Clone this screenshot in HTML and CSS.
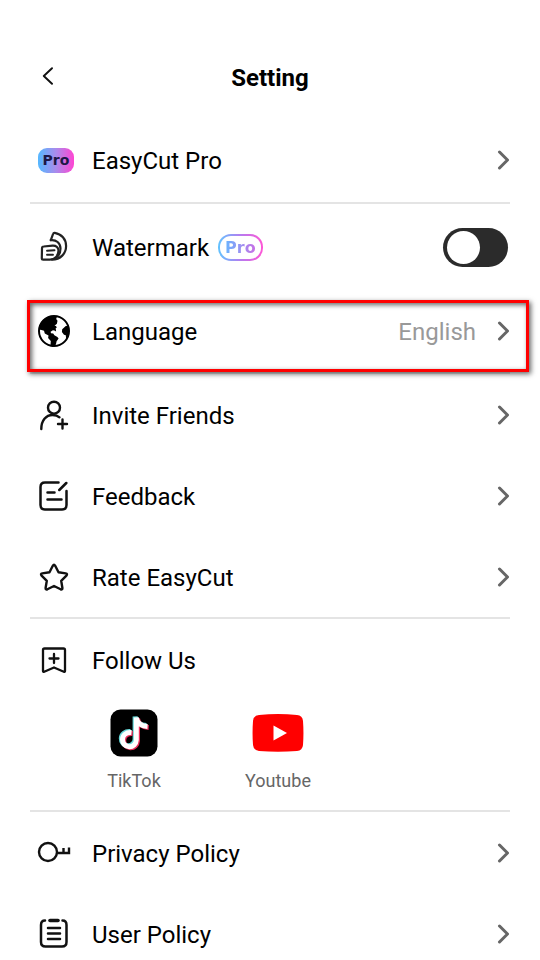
FILE: index.html
```html
<!DOCTYPE html>
<html lang="en">
<head>
<meta charset="utf-8">
<meta name="viewport" content="width=device-width, initial-scale=1">
<title>Setting</title>
<link rel="stylesheet" href="styles.css">
</head>
<body>
<svg class="defs" aria-hidden="true">
  <symbol id="chevron" viewBox="0 0 14 20"><path d="M3.500 2l8 8-8 8" fill="none" stroke="#666" stroke-width="3" stroke-linecap="round" stroke-linejoin="round"/></symbol>
</svg>
<main class="screen">
  <header class="header">
    <button class="back" type="button" aria-label="Back">
      <svg width="12" height="18" viewBox="0 0 12 18"><path d="M10 1.200L1.800 9l8.200 7.800" fill="none" stroke="#111" stroke-width="1.900" stroke-linecap="round" stroke-linejoin="round"/></svg>
    </button>
    <h1 class="title">Setting</h1>
  </header>

  <section class="group first">
    <a class="row" href="#pro">
      <span class="icon"><span class="badge filled">Pro</span></span>
      <span class="label">EasyCut Pro</span>
      <svg class="chevron"><use href="#chevron"/></svg>
    </a>
  </section>

  <section class="group">
    <div class="row tall">
      <span class="icon">
        <svg width="32" height="34" viewBox="0 0 32 34" fill="none" stroke="#222" stroke-width="2.200" stroke-linejoin="round" stroke-linecap="round"><path d="M4 18.200q0-1.600 1.600-1.700l9-.8c3.400-.2 5.900 1.500 5.900 4.900 0 5-3.500 9.100-8.500 9.100H5.200q-1.400 0-1.400-1.400z"/><path d="M12.800 10.200l2.300-6.400q.4-1.200 1.700-1C23.500 4 28.100 9 28.100 16c0 7.500-5.600 13.600-14.100 13.700"/><path d="M12.800 10.200C18 9.500 22.500 13 22.500 18.500c0 3.500-1.300 6.500-3.500 8.500"/><path d="M9 20.700l7.500-.5M9 24.800h6" stroke-width="1.900"/></svg>
      </span>
      <label class="label" for="watermark">Watermark</label>
      <span class="badge outlined"><span class="badge-text">Pro</span></span>
      <input class="switch" id="watermark" type="checkbox" role="switch">
    </div>
    <a class="row highlighted" href="#language">
      <span class="icon">
        <svg width="32" height="32" viewBox="0 0 32 32"><circle cx="16" cy="16" r="15" fill="#fff" stroke="#000" stroke-width="2"/><path d="M1 14.500C1.500 6 8 1 16 1l3 .4-.8 2.600 1.300 1.700-.6 3-2.400 2 1.600.2.600 2.200-1-.2.400 3.600-1.700-1-1.500-.3-2.300 1.600.4 1.400 2.200.2 1.200 1.800 3 1.800 1.200 1.500-2 2.700-.7 3.200-3.400 2.600-2-1.800.3-4.200-2.700-3 .4-2.600-3.700-1.800-.8-2.800-2.500-.7z"/><path d="M31 10.500l-3.200.5-3.600 3.300-.3 2.700 2.100 2.800 1.800.4.300 3.600 2-2.500L31 16z"/></svg>
      </span>
      <span class="label">Language</span>
      <span class="value">English</span>
      <svg class="chevron"><use href="#chevron"/></svg>
    </a>
  </section>

  <section class="group">
    <a class="row" href="#invite">
      <span class="icon">
        <svg width="32" height="32" viewBox="0 0 32 32" fill="none" stroke="#111" stroke-width="2.400" stroke-linecap="round"><circle cx="16" cy="8.700" r="6"/><path d="M3.300 30C3.300 21.500 8 16 14.500 16q4.500 0 7 2.300M24.500 20.500v9M20 25h9"/></svg>
      </span>
      <span class="label">Invite Friends</span>
      <svg class="chevron"><use href="#chevron"/></svg>
    </a>
    <a class="row" href="#feedback">
      <span class="icon">
        <svg width="32" height="32" viewBox="0 0 32 32" fill="none" stroke="#111" stroke-width="2.500" stroke-linecap="round" stroke-linejoin="round"><path d="M20.500 2.500H7q-4.500 0-4.500 4.500v18q0 4.500 4.500 4.500h17q4.500 0 4.500-4.500V11M28.300 3l-7 7M9.500 12.500h7M9.500 19.500h14"/></svg>
      </span>
      <span class="label">Feedback</span>
      <svg class="chevron"><use href="#chevron"/></svg>
    </a>
    <a class="row" href="#rate">
      <span class="icon">
        <svg width="32" height="32" viewBox="0 0 32 32" fill="none" stroke="#111" stroke-width="2.400" stroke-linejoin="round"><path d="M14.800 4.800Q16 2.800 17.200 4.800l3.300 6.500 7.200 1.100q2.200.5.700 2.200l-5.200 5.200 1.200 7.200q.1 2.100-1.800 1.300L16 25l-6.600 3.300q-1.900.8-1.800-1.300l1.200-7.200-5.200-5.200q-1.500-1.700.7-2.200l7.200-1.100z"/></svg>
      </span>
      <span class="label">Rate EasyCut</span>
      <svg class="chevron"><use href="#chevron"/></svg>
    </a>
  </section>

  <section class="group">
    <div class="row">
      <span class="icon">
        <svg width="32" height="32" viewBox="0 0 32 32" fill="none" stroke="#111" stroke-width="2.300" stroke-linecap="round" stroke-linejoin="round"><path d="M6.500 4.500h19q1.500 0 1.500 1.500V27q0 1.200-1.200.7L16 23.500 6.200 27.700q-1.200.5-1.200-.7V6q0-1.500 1.500-1.500zM16 10v9M11.500 14.500h9"/></svg>
      </span>
      <span class="label">Follow Us</span>
    </div>
    <nav class="socials">
      <a class="social" href="#tiktok">
        <svg width="48" height="48" viewBox="0 0 48 48"><rect x=".5" y=".5" width="47" height="47" rx="10" fill="#000"/><g fill="none" stroke-width="5"><g stroke="#68d8d8" transform="translate(-1.200 -1)"><path d="M21.500 23.500c-5-.5-9 2.500-9 7a6.800 6.800 0 0 0 13.800.5V8.500c.7 5 4.500 8.500 11.200 9"/></g><g stroke="#e8305c" transform="translate(1.200 1)"><path d="M21.500 23.500c-5-.5-9 2.500-9 7a6.800 6.800 0 0 0 13.800.5V8.500c.7 5 4.500 8.500 11.200 9"/></g><path stroke="#fff" d="M21.500 23.500c-5-.5-9 2.500-9 7a6.800 6.800 0 0 0 13.800.5V8.500c.7 5 4.500 8.500 11.200 9"/></g></svg>
        <span>TikTok</span>
      </a>
      <a class="social" href="#youtube">
        <svg width="52" height="48" viewBox="0 0 52 48"><path d="M7 6Q26 4.200 45 6q5.500.5 6 6 .9 12 0 24-.5 5.500-6 6-19 1.600-38 0-5.500-.5-6-6Q.100 24 1 12q.5-5.500 6-6z" fill="#f00"/><path d="M21.500 16.500v15L35 24z" fill="#fff"/></svg>
        <span>Youtube</span>
      </a>
    </nav>
  </section>

  <section class="group">
    <a class="row" href="#privacy">
      <span class="icon">
        <svg width="34" height="32" viewBox="0 0 34 32" fill="none" stroke="#111" stroke-width="2.400"><circle cx="11" cy="15" r="9"/><path d="M20 16h12v-5.500M26.500 16v-5"/></svg>
      </span>
      <span class="label">Privacy Policy</span>
      <svg class="chevron"><use href="#chevron"/></svg>
    </a>
    <a class="row" href="#user">
      <span class="icon">
        <svg width="32" height="32" viewBox="0 0 32 32" fill="none" stroke="#111" stroke-width="2.500" stroke-linecap="round"><path d="M7 2.500q-4 0-4 4.500v17q0 4.500 4.500 4.500h16.500q4.500 0 4.500-4.500V7q0-4.500-4-4.500M10 10h12M10 15.500h12M10 21h12"/><path d="M12 2.500h8" stroke-width="3.600"/></svg>
      </span>
      <span class="label">User Policy</span>
      <svg class="chevron"><use href="#chevron"/></svg>
    </a>
  </section>
</main>
</body>
</html>
```
FILE: styles.css
```css
* {
  box-sizing: border-box;
}

body {
  margin: 0;
  background: #fff;
  color: #000;
  font-family: Roboto, "Liberation Sans", sans-serif;
  font-size: 24px;
  line-height: 28px;
}

a {
  color: inherit;
  text-decoration: none;
}

.defs {
  display: none;
}

.screen {
  height: 100vh;
  overflow: hidden;
  padding: 0 30px;
}

.header {
  display: grid;
  grid-template-columns: 36px 1fr 36px;
  align-items: center;
  padding: 60px 0 22px;
}

.back {
  display: flex;
  justify-content: center;
  padding: 6px 0 10px;
  border: 0;
  background: none;
}

.title {
  margin: 0;
  font-size: 24px;
  font-weight: 700;
  line-height: 36px;
  text-align: center;
}

.group + .group {
  border-top: 2px solid #e4e4e4;
}

.row {
  display: flex;
  align-items: center;
  min-height: 81px;
}

.first .row {
  min-height: 84px;
}

.row.tall {
  min-height: 86px;
}

.row.highlighted {
  min-height: 82px;
}

.icon {
  display: flex;
  flex: none;
  justify-content: center;
  width: 48px;
  margin-right: 14px;
}

.label,
.value {
  padding-top: 2px;
}

.value {
  margin-left: auto;
  color: #999;
}

.chevron {
  flex: none;
  width: 14px;
  height: 20px;
  margin-left: auto;
}

.value + .chevron {
  margin-left: 20px;
}

.badge {
  font-family: "DejaVu Sans", sans-serif;
  font-weight: 700;
  text-align: center;
}

.filled {
  width: 36px;
  border-radius: 9px;
  margin-left: 4px;
  background: linear-gradient(90deg, #55b8ff, #a98bec 50%, #ff45d2);
  color: #1d1747;
  font-size: 14px;
  line-height: 25px;
}

.outlined {
  margin-left: 9px;
  padding: 0 5px;
  border: 2px solid transparent;
  border-radius: 13px;
  background: linear-gradient(#fff, #fff) padding-box, linear-gradient(90deg, #60c4ff, #b57cf0 50%, #ff55d5) border-box;
  font-size: 16px;
  line-height: 23px;
}

.badge-text {
  background: linear-gradient(90deg, #68b5ff, #ca6ee5);
  background-clip: text;
  color: transparent;
}

.switch {
  appearance: none;
  display: flex;
  align-items: center;
  width: 65px;
  height: 39px;
  margin: 0 2px 0 auto;
  padding: 0 4px;
  border-radius: 20px;
  background: #2b2b2b;
}

.switch::before {
  content: "";
  width: 33px;
  height: 33px;
  border-radius: 50%;
  background: #fff;
}

.switch:checked::before {
  margin-left: auto;
}

.highlighted {
  position: relative;
}

.highlighted::after {
  content: "";
  position: absolute;
  inset: 10px -19px 0 -3px;
  border: 3px solid #f00;
  box-shadow: 2px 2px 5px rgba(0, 0, 0, 0.6), inset 2px 2px 5px rgba(0, 0, 0, 0.6);
}

.socials {
  display: flex;
  gap: 48px;
  padding: 9px 56px 17px;
}

.social {
  display: flex;
  flex-direction: column;
  align-items: center;
  gap: 12px;
  width: 96px;
  color: #666;
  font-size: 18px;
  line-height: 24px;
}
```
